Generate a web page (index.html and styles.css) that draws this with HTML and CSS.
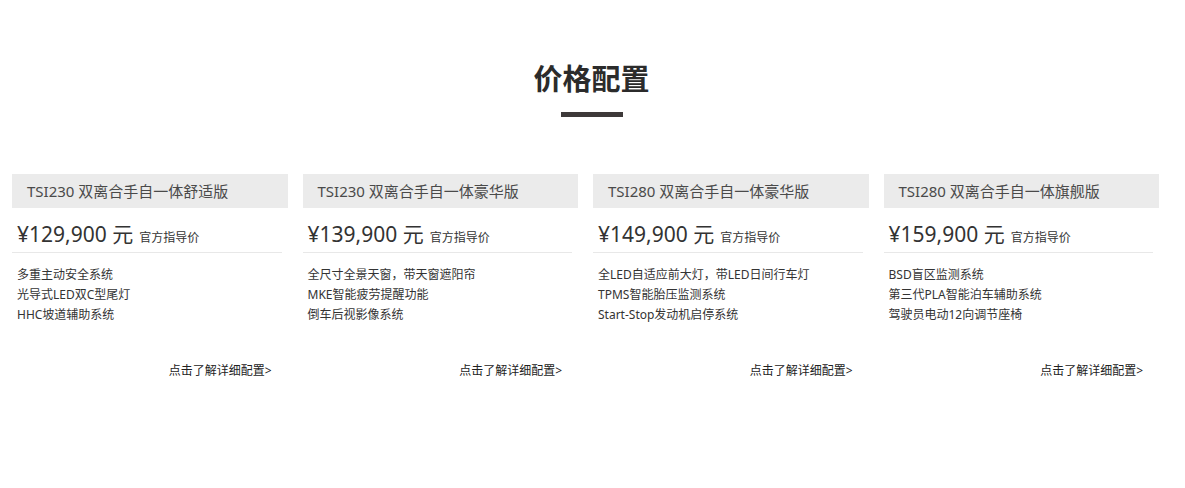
FILE: index.html
```html
<!DOCTYPE html>
<html lang="zh-CN">
<head>
<meta charset="utf-8">
<title>价格配置</title>
<link rel="stylesheet" href="styles.css">
</head>
<body>
<section class="price-section">
  <div class="section-header">
    <h2 class="section-title">价格配置</h2>
    <div class="title-bar"></div>
  </div>
  <div class="cards">
    <div class="card">
      <div class="card-head">TSI230 双离合手自一体舒适版</div>
      <div class="card-price"><span class="amount">¥129,900 元</span><span class="note">官方指导价</span></div>
      <ul class="features">
        <li>多重主动安全系统</li>
        <li>光导式LED双C型尾灯</li>
        <li>HHC坡道辅助系统</li>
      </ul>
      <div class="more"><a href="#">点击了解详细配置&gt;</a></div>
    </div>
    <div class="card">
      <div class="card-head">TSI230 双离合手自一体豪华版</div>
      <div class="card-price"><span class="amount">¥139,900 元</span><span class="note">官方指导价</span></div>
      <ul class="features">
        <li>全尺寸全景天窗，带天窗遮阳帘</li>
        <li>MKE智能疲劳提醒功能</li>
        <li>倒车后视影像系统</li>
      </ul>
      <div class="more"><a href="#">点击了解详细配置&gt;</a></div>
    </div>
    <div class="card">
      <div class="card-head">TSI280 双离合手自一体豪华版</div>
      <div class="card-price"><span class="amount">¥149,900 元</span><span class="note">官方指导价</span></div>
      <ul class="features">
        <li>全LED自适应前大灯，带LED日间行车灯</li>
        <li>TPMS智能胎压监测系统</li>
        <li>Start-Stop发动机启停系统</li>
      </ul>
      <div class="more"><a href="#">点击了解详细配置&gt;</a></div>
    </div>
    <div class="card">
      <div class="card-head">TSI280 双离合手自一体旗舰版</div>
      <div class="card-price"><span class="amount">¥159,900 元</span><span class="note">官方指导价</span></div>
      <ul class="features">
        <li>BSD盲区监测系统</li>
        <li>第三代PLA智能泊车辅助系统</li>
        <li>驾驶员电动12向调节座椅</li>
      </ul>
      <div class="more"><a href="#">点击了解详细配置&gt;</a></div>
    </div>
  </div>
</section>
</body>
</html>
```
FILE: styles.css
```css
* { box-sizing: border-box; }
html, body { margin: 0; padding: 0; background: #fff; }
body {
  font-family: "Noto Sans", "Noto Sans CJK SC", sans-serif;
  color: #333;
}
.price-section {
  padding: 56px 11px 0 12px;
}
.section-header {
  padding-right: 3px;
}
.section-title {
  margin: 0;
  text-align: center;
  font-family: "Noto Sans CJK SC", sans-serif;
  font-size: 29px;
  font-weight: 700;
  line-height: 42px;
  color: #2b2b2b;
}
.title-bar {
  width: 62px;
  height: 5px;
  background: #3d3939;
  margin: 14px auto 0;
}
.cards {
  display: grid;
  grid-template-columns: repeat(4, 1fr);
  margin-top: 57px;
}
.card {
  padding-right: 15px;
}
.card-head {
  height: 34px;
  background: #ebebeb;
  padding-left: 15px;
  font-size: 15px;
  line-height: 34px;
  color: #4a4a4a;
  white-space: nowrap;
}
.card-price {
  margin-right: 6px;
  border-bottom: 1px solid #e8e8e8;
  padding: 9px 0 0 5px;
  height: 45px;
  white-space: nowrap;
}
.amount {
  font-size: 21px;
  font-weight: 400;
  line-height: 34px;
  color: #333;
}
.note {
  font-size: 12px;
  margin-left: 6px;
  color: #333;
}
.features {
  list-style: none;
  margin: 0;
  padding: 12px 0 0 5px;
  font-size: 12px;
  line-height: 20px;
  color: #333;
}
.more {
  margin-top: 36px;
  text-align: right;
  padding-right: 16px;
  font-size: 12px;
  line-height: 20px;
}
.more a {
  color: #222;
  text-decoration: none;
}
```
